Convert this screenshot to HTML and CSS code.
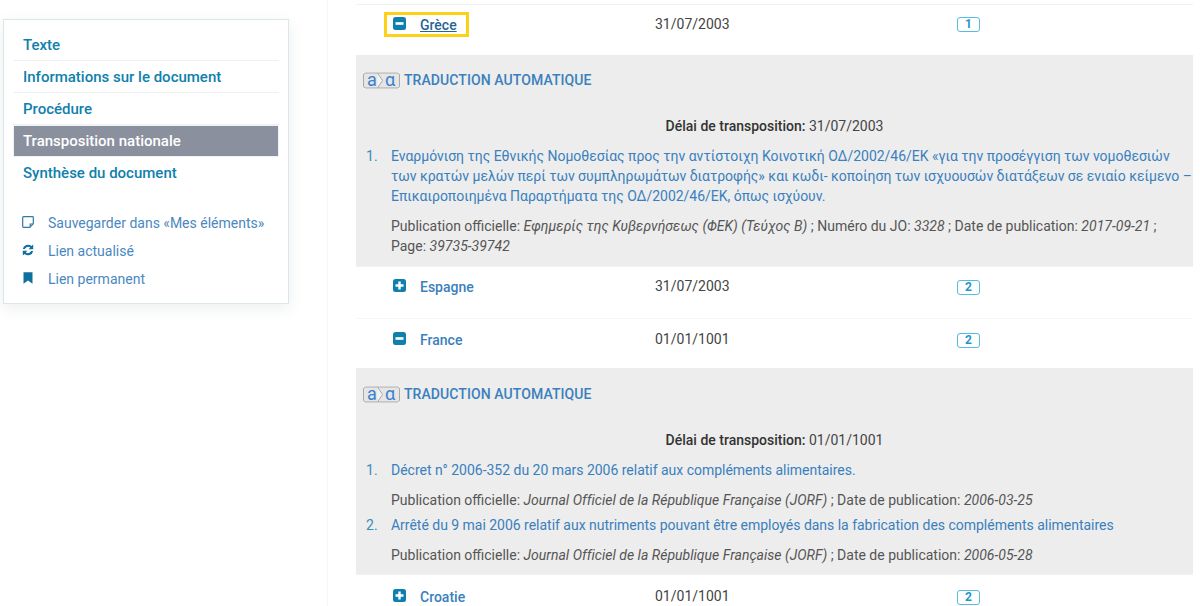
FILE: index.html
```html
<!DOCTYPE html>
<html lang="fr">
<head>
<meta charset="utf-8">
<title>Transposition nationale</title>
<link rel="stylesheet" href="styles.css">
</head>
<body>
<svg class="defs" width="0" height="0" aria-hidden="true">
  <symbol id="minus" viewBox="0 0 13 13"><rect width="13" height="13" rx="2.5" fill="#0f80ad"/><rect x="2.5" y="5.2" width="8" height="2.6" fill="#fff"/></symbol>
  <symbol id="plus" viewBox="0 0 13 13"><rect width="13" height="13" rx="2.5" fill="#0f80ad"/><path d="M2.5 5.3h2.800V2.500h2.400v2.800h2.800v2.400H7.700v2.800H5.300V7.700H2.500z" fill="#fff"/></symbol>
  <symbol id="mt" viewBox="0 0 37 17">
    <rect x="0" y="0" width="37" height="17" fill="#fbfbfb"/>
    <rect x=".5" y="1" width="36" height="15" rx="2" fill="#e6e6e6" stroke="#a9a9a9"/>
    <path d="M14.500 1l5 7.500-5 7.500" fill="#f4f4f4" stroke="#a9a9a9"/>
  </symbol>
</svg>
<div class="page">
  <aside class="side">
    <nav class="card">
      <ul class="tabs">
        <li class="tab"><a href="#">Texte</a></li>
        <li class="tab"><a href="#">Informations sur le document</a></li>
        <li class="tab"><a href="#">Procédure</a></li>
        <li class="tab active"><a href="#">Transposition nationale</a></li>
        <li class="tab last"><a href="#">Synthèse du document</a></li>
      </ul>
      <ul class="tools">
        <li class="tool">
          <svg class="tool-ico" viewBox="0 0 12 12"><path d="M1.500.7h9a.8.8 0 0 1 .8.8v6.300l-3.500 3.500H1.500a.8.8 0 0 1-.8-.8v-9a.8.8 0 0 1 .8-.8z" fill="none" stroke="#2f7aa8" stroke-width="1.200"/><path d="M11 8H8.200v2.800" fill="none" stroke="#2f7aa8" stroke-width="1.200"/></svg>
          <a href="#">Sauvegarder dans «Mes éléments»</a>
        </li>
        <li class="tool">
          <svg class="tool-ico" viewBox="0 0 12 12"><path d="M.8 5A5.200 5.200 0 0 1 9.500 2.100L11.200.6v4.700H6.600l1.700-1.700A3.400 3.400 0 0 0 2.900 5zM11.200 7A5.200 5.200 0 0 1 2.500 9.900L.8 11.400V6.700h4.600L3.700 8.400A3.400 3.400 0 0 0 9.100 7z" fill="#0f6f9e"/></svg>
          <a href="#">Lien actualisé</a>
        </li>
        <li class="tool">
          <svg class="tool-ico" viewBox="0 0 12 12"><path d="M1.500.3h9v11.400L6 8.400 1.500 11.700z" fill="#0f6f9e"/></svg>
          <a href="#">Lien permanent</a>
        </li>
      </ul>
    </nav>
  </aside>
  <main class="main">
    <div class="row first">
      <div class="country"><span class="focus"><svg class="toggle"><use href="#minus"/></svg><a class="name current" href="#">Grèce</a></span></div>
      <div class="date">31/07/2003</div>
      <div><span class="badge">1</span></div>
    </div>
    <section class="panel">
      <div class="mt"><span class="mt-icon"><svg class="mt-svg"><use href="#mt"/></svg><span class="mt-a">a</span><span class="mt-b">α</span></span><span class="mt-label">TRADUCTION AUTOMATIQUE</span></div>
      <p class="deadline"><b>Délai de transposition:</b> 31/07/2003</p>
      <ol class="acts">
        <li class="act">
          <a href="#">Εναρμόνιση της Εθνικής Νομοθεσίας προς την αντίστοιχη Κοινοτική ΟΔ/2002/46/ΕΚ «για την προσέγγιση των νομοθεσιών των κρατών μελών περί των συμπληρωμάτων διατροφής» και κωδι- κοποίηση των ισχυουσών διατάξεων σε ενιαίο κείμενο – Επικαιροποιημένα Παραρτήματα της ΟΔ/2002/46/ΕΚ, όπως ισχύουν.</a>
          <p class="pub">Publication officielle: <i>Εφημερίς της Κυβερνήσεως (ΦΕΚ) (Τεύχος Β)</i> ; Numéro du JO: <i>3328</i> ; Date de publication: <i>2017-09-21</i> ; Page: <i>39735-39742</i></p>
        </li>
      </ol>
    </section>
    <div class="row">
      <div class="country"><svg class="toggle"><use href="#plus"/></svg><a class="name" href="#">Espagne</a></div>
      <div class="date">31/07/2003</div>
      <div><span class="badge">2</span></div>
    </div>
    <div class="row ruled">
      <div class="country"><svg class="toggle"><use href="#minus"/></svg><a class="name" href="#">France</a></div>
      <div class="date">01/01/1001</div>
      <div><span class="badge">2</span></div>
    </div>
    <section class="panel second">
      <div class="mt"><span class="mt-icon"><svg class="mt-svg"><use href="#mt"/></svg><span class="mt-a">a</span><span class="mt-b">α</span></span><span class="mt-label">TRADUCTION AUTOMATIQUE</span></div>
      <p class="deadline"><b>Délai de transposition:</b> 01/01/1001</p>
      <ol class="acts">
        <li class="act tight">
          <a href="#">Décret n° 2006-352 du 20 mars 2006 relatif aux compléments alimentaires.</a>
          <p class="pub">Publication officielle: <i>Journal Officiel de la République Française (JORF)</i> ; Date de publication: <i>2006-03-25</i></p>
        </li>
        <li class="act end">
          <a href="#">Arrêté du 9 mai 2006 relatif aux nutriments pouvant être employés dans la fabrication des compléments alimentaires</a>
          <p class="pub">Publication officielle: <i>Journal Officiel de la République Française (JORF)</i> ; Date de publication: <i>2006-05-28</i></p>
        </li>
      </ol>
    </section>
    <div class="row closing">
      <div class="country"><svg class="toggle"><use href="#plus"/></svg><a class="name" href="#">Croatie</a></div>
      <div class="date">01/01/1001</div>
      <div><span class="badge">2</span></div>
    </div>
  </main>
</div>
</body>
</html>
```
FILE: styles.css
```css
* { box-sizing: border-box; }
html, body { margin: 0; padding: 0; height: 606px; overflow: hidden; background: #fff; }
body { font-family: Roboto, "Noto Sans", sans-serif; font-size: 14px; line-height: 20px; color: #444; }
a { text-decoration: none; color: #3a80bd; }
ul, ol, p { margin: 0; padding: 0; list-style: none; }
.defs { position: absolute; }
.page { display: flex; height: 606px; }

.side { width: 328px; flex: none; padding: 19px 0 0 3px; border-right: 1px solid #f3f5f7; }
.card { width: 286px; height: 285px; padding: 9px 9px 0 9px; background: #fff; border: 1px solid #dce6ea; box-shadow: 0 4px 14px rgba(40, 70, 90, .09); }
.tab { height: 32px; border-bottom: 1px solid #eef2f4; font-size: 15px; font-weight: 500; line-height: 32px; padding-left: 10px; }
.tab a { color: #0f80ad; }
.tab.active { height: 32px; background: #8a909e; border: 1px solid #eef2f4; padding-left: 9px; line-height: 30px; }
.tab.active a { color: #fff; }
.tab.last { border-bottom: 0; }
.tools { margin-top: 20px; }
.tool { display: flex; align-items: center; height: 28px; font-size: 14px; padding-left: 9px; }
.tool a { color: #4a88c0; }
.tool-ico { width: 12px; height: 12px; flex: none; margin-right: 14px; margin-top: -2px; }

.main { width: 837px; margin-left: 28px; flex: none; padding-top: 4px; }
.row { display: grid; grid-template-columns: 299px 302px 1fr; height: 52px; padding-top: 8px; align-items: center; align-content: start; border-top: 1px solid #f0f2f3; }
.row.ruled { height: 50px; border-top: 1px solid #f4f5f6; padding-top: 9px; }
.row.first { height: 51px; padding-top: 7px; }
.row.closing { padding-top: 10px; }
.country { display: flex; align-items: center; height: 24px; padding-left: 37px; }
.focus { display: flex; align-items: center; width: 85px; height: 25px; margin-left: -9px; padding: 2px 0 0 6px; border: 3px solid #fdd116; flex: none; }
.toggle { width: 13px; height: 13px; flex: none; margin-right: 14px; margin-top: -3px; }
.name { font-weight: 500; color: #3a80bd; }
.name.current { color: #2a6496; text-decoration: underline; }
.date { color: #444; margin-top: -2px; }
.row.first .date { margin-top: 0; }
.badge { display: block; width: 23px; height: 15px; border: 1px solid #55bde0; border-radius: 3px; color: #1d97c7; font-size: 12px; font-weight: 700; line-height: 13px; text-align: center; }

.panel { background: #ededed; padding: 14px 0 0 8px; }
.panel.second { padding-top: 15px; }
.mt { display: flex; align-items: center; height: 22px; margin-left: -1px; }
.mt-icon { position: relative; width: 37px; height: 17px; margin-right: 4px; flex: none; }
.mt-svg { display: block; width: 37px; height: 17px; }
.mt-a, .mt-b { position: absolute; top: -2px; font-size: 18px; color: #3a80d0; line-height: 20px; }
.mt-a { left: 4px; }
.mt-b { left: 22px; }
.mt-label { font-weight: 500; color: #3a80bd; letter-spacing: .08px; }
.deadline { text-align: center; margin-top: 25px; padding-right: 8px; color: #444; }
.deadline b { font-weight: 500; color: #333; }
.acts { counter-reset: act; margin-top: 10px; }
.act { position: relative; padding-left: 27px; counter-increment: act; padding-bottom: 10px; }
.act > a { letter-spacing: -.02px; }
.act::before { content: counter(act) "."; position: absolute; left: 2px; top: 0; color: #3a8cbd; }
.act.tight { padding-bottom: 5px; }
.act.end { padding-bottom: 9px; }
.pub { margin-top: 10px; color: #555; }
.pub i { letter-spacing: .02px; }
```
